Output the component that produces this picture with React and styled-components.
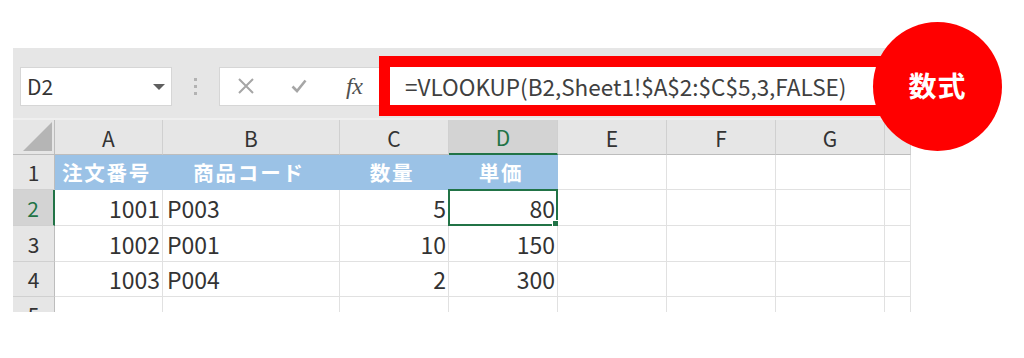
import React from "react";
import styled, { createGlobalStyle } from "styled-components";

const Global = createGlobalStyle`
  html, body { margin: 0; padding: 0; background: #ffffff; }
  body { font-family: "Noto Sans CJK JP", "Noto Sans", sans-serif; }
`;

const Page = styled.div`
  position: relative;
  width: 1024px;
  height: 358px;
  overflow: hidden;
  padding: 48px 0 0 13px;
  box-sizing: border-box;
`;

const Sheet = styled.div`
  width: 898px;
  height: 264px;
  overflow: hidden;
  display: flex;
  flex-direction: column;
`;

const FormulaBar = styled.div`
  height: 72px;
  flex: none;
  background: #e6e6e6;
  display: flex;
  align-items: center;
  padding: 6px 0 0 7px;
  box-sizing: border-box;
  border-bottom: 2px solid #efefef;
`;

const NameBox = styled.div`
  width: 152px;
  height: 39px;
  background: #fff;
  border: 1px solid #d6d6d6;
  box-sizing: border-box;
  display: flex;
  align-items: center;
  justify-content: space-between;
  padding: 0 6px 0 6px;
  font-size: 21px;
  color: #333;
`;

const Arrow = styled.span`
  width: 0;
  height: 0;
  border-left: 6px solid transparent;
  border-right: 6px solid transparent;
  border-top: 6px solid #5f5f5f;
  margin-top: 2px;
`;

const Dots = styled.div`
  width: 47px;
  display: flex;
  flex-direction: column;
  align-items: center;
  gap: 4px;
`;

const Dot = styled.span`
  width: 3px;
  height: 3px;
  background: #b3b3b3;
`;

const ButtonBox = styled.div`
  width: 168px;
  height: 39px;
  background: #fff;
  border: 1px solid #d6d6d6;
  box-sizing: border-box;
  display: flex;
  align-items: center;
  padding-left: 17px;
`;

const IconSlot = styled.span`
  width: ${(p) => p.$w}px;
  display: flex;
  align-items: center;
`;

const Fx = styled.span`
  font-family: "Liberation Serif", "DejaVu Serif", serif;
  font-style: italic;
  font-size: 24px;
  color: #505050;
  letter-spacing: -0.5px;
`;

const FormulaInput = styled.div`
  margin-left: 3px;
  width: 510px;
  height: 38px;
  background: #fff;
  outline: 11px solid #ff0000;
  display: flex;
  align-items: center;
  padding-left: 15px;
  box-sizing: border-box;
  font-size: 22.5px;
  color: #404040;
  white-space: nowrap;
`;

const Grid = styled.div`
  display: flex;
  flex-direction: column;
`;

const Row = styled.div`
  display: grid;
  grid-template-columns: 42px 108px 177px 109px 109px 109px 109px 109px 26px;
  height: ${(p) => p.$h}px;
  flex: none;
`;

const ColHead = styled.div`
  background: ${(p) => (p.$active ? "#d3d3d3" : "#e6e6e6")};
  color: ${(p) => (p.$active ? "#217346" : "#333")};
  border-right: 1px solid #d0d0d0;
  border-bottom: ${(p) => (p.$active ? "2px solid #217346" : "1px solid #bdbdbd")};
  box-sizing: border-box;
  display: flex;
  align-items: center;
  justify-content: center;
  font-size: 21px;
  padding-top: 1px;
`;

const Corner = styled.div`
  background: #e6e6e6;
  border-right: 1px solid #bdbdbd;
  border-bottom: 1px solid #bdbdbd;
  box-sizing: border-box;
  display: flex;
  align-items: flex-end;
  justify-content: flex-end;
  padding: 0 2px 3px 0;
`;

const Triangle = styled.span`
  width: 0;
  height: 0;
  border-left: 29px solid transparent;
  border-bottom: 29px solid #b5b5b5;
`;

const RowHead = styled.div`
  background: ${(p) => (p.$active ? "#d3d3d3" : "#e6e6e6")};
  color: ${(p) => (p.$active ? "#217346" : "#333")};
  border-right: ${(p) => (p.$active ? "2px solid #217346" : "1px solid #bdbdbd")};
  border-bottom: 1px solid #d0d0d0;
  box-sizing: border-box;
  display: flex;
  align-items: center;
  justify-content: center;
  font-size: 21px;
`;

const Cell = styled.div`
  position: relative;
  background: ${(p) => (p.$fill ? "#9bc2e6" : "#fff")};
  color: ${(p) => (p.$fill ? "#fff" : "#333")};
  font-weight: ${(p) => (p.$fill ? 700 : 400)};
  font-size: ${(p) => (p.$fill ? 20.5 : 23)}px;
  letter-spacing: ${(p) => (p.$fill ? "1.8px" : "0")};
  border-right: 1px solid ${(p) => (p.$fill ? "#9bc2e6" : "#e1e1e1")};
  border-bottom: 1px solid ${(p) => (p.$fill ? "#9bc2e6" : "#e1e1e1")};
  box-sizing: border-box;
  display: flex;
  align-items: center;
  justify-content: ${(p) =>
    p.$align === "right" ? "flex-end" : p.$align === "center" ? "center" : "flex-start"};
  padding: 0 ${(p) => (p.$align === "right" ? 2 : 4)}px 0 ${(p) => (p.$align === "left" ? 4 : 0)}px;
  white-space: nowrap;
`;

const Selection = styled.span`
  position: absolute;
  left: -1px;
  top: -1px;
  right: -1px;
  bottom: -1px;
  border: 2px solid #217346;
  pointer-events: none;
  &::after {
    content: "";
    position: absolute;
    right: -4px;
    bottom: -4px;
    width: 6px;
    height: 6px;
    background: #217346;
    border: 1px solid #fff;
  }
`;

const Badge = styled.div`
  position: absolute;
  left: 873px;
  top: 22px;
  width: 129px;
  height: 129px;
  border-radius: 50%;
  background: #ff0000;
  color: #fff;
  display: flex;
  align-items: center;
  justify-content: center;
  font-size: 28px;
  font-weight: 700;
  letter-spacing: 1px;
  padding-bottom: 4px;
  box-sizing: border-box;
`;

const cols = ["A", "B", "C", "D", "E", "F", "G", ""];

const rows = [
  { n: 1, h: 35, cells: [["注文番号", "center", true], ["商品コード", "center", true], ["数量", "center", true], ["単価", "center", true]] },
  { n: 2, h: 36, active: true, cells: [["1001", "right"], ["P003", "left"], ["5", "right"], ["80", "right", false, true]] },
  { n: 3, h: 36, cells: [["1002", "right"], ["P001", "left"], ["10", "right"], ["150", "right"]] },
  { n: 4, h: 35, cells: [["1003", "right"], ["P004", "left"], ["2", "right"], ["300", "right"]] },
  { n: 5, h: 35, cells: [] },
];

export default function App() {
  return (
    <>
      <Global />
      <Page>
        <Sheet>
          <FormulaBar>
            <NameBox>
              D2
              <Arrow />
            </NameBox>
            <Dots>
              <Dot />
              <Dot />
              <Dot />
            </Dots>
            <ButtonBox>
              <IconSlot $w={54}>
                <svg width="18" height="18" viewBox="0 0 18 18">
                  <path d="M2 2 L16 16 M16 2 L2 16" stroke="#a6a6a6" strokeWidth="2" fill="none" />
                </svg>
              </IconSlot>
              <IconSlot $w={55}>
                <svg width="16" height="14" viewBox="0 0 16 14">
                  <path d="M1.5 7.5 L6 12 L14.5 1.5" stroke="#a6a6a6" strokeWidth="2.6" fill="none" />
                </svg>
              </IconSlot>
              <Fx>fx</Fx>
            </ButtonBox>
            <FormulaInput>=VLOOKUP(B2,Sheet1!$A$2:$C$5,3,FALSE)</FormulaInput>
          </FormulaBar>
          <Grid>
            <Row $h={35}>
              <Corner>
                <Triangle />
              </Corner>
              {cols.map((c, i) => (
                <ColHead key={i} $active={c === "D"}>
                  {c}
                </ColHead>
              ))}
            </Row>
            {rows.map((r) => (
              <Row key={r.n} $h={r.h}>
                <RowHead $active={r.active}>{r.n}</RowHead>
                {cols.map((c, i) => {
                  const d = r.cells[i];
                  if (!d) return <Cell key={i} />;
                  const [text, align, fill, sel] = d;
                  return (
                    <Cell key={i} $align={align} $fill={fill}>
                      {text}
                      {sel && <Selection />}
                    </Cell>
                  );
                })}
              </Row>
            ))}
          </Grid>
        </Sheet>
        <Badge>数式</Badge>
      </Page>
    </>
  );
}
